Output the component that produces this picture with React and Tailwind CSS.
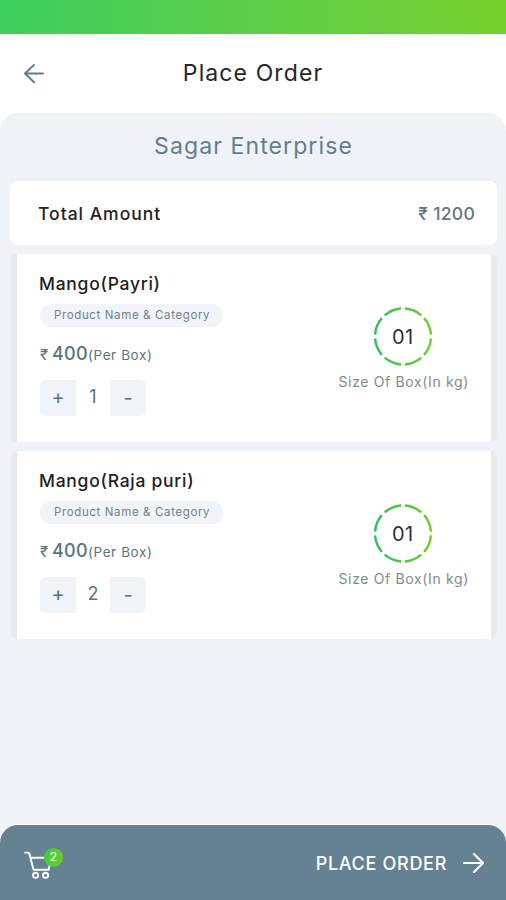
import { useState } from 'react';

const initialItems = [
  { id: 1, name: 'Mango(Payri)', price: 400, size: '01', qty: 1 },
  { id: 2, name: 'Mango(Raja puri)', price: 400, size: '01', qty: 2 },
];

function BackArrow() {
  return (
    <svg width="20" height="20" viewBox="0 0 20 20" fill="none" stroke="#5d7d8f" strokeWidth="2" strokeLinecap="round" strokeLinejoin="round">
      <path d="M19 9.500H1M10 .9L1 9.500l9 8.800" />
    </svg>
  );
}

function CartIcon() {
  return (
    <svg width="28" height="28" viewBox="0 0 28 28" fill="none" stroke="white" strokeWidth="1.9" strokeLinecap="round" strokeLinejoin="round">
      <path d="M1 1.600h2.800c.9 0 1.400.4 1.600 1.200L9.500 18.800h15.200M6.600 6.800h20.200l-2.100 12" />
      <circle cx="11.600" cy="24.300" r="2.600" />
      <circle cx="21.600" cy="24.300" r="2.600" />
    </svg>
  );
}

function SizeRing({ id, size }) {
  return (
    <div className="relative w-[60px] h-[60px] mr-[2px] flex items-center justify-center">
      <svg className="absolute inset-0" width="60" height="60" viewBox="0 0 60 60" fill="none">
        <defs>
          <linearGradient id={`ring-${id}`} x1="0" y1="0" x2="60" y2="0" gradientUnits="userSpaceOnUse">
            <stop stopColor="#2dbf63" />
            <stop offset="1" stopColor="#78cc2c" />
          </linearGradient>
        </defs>
        {/* 8 dashes, a gap at the top */}
        <circle cx="30" cy="29.500" r="28" stroke={`url(#ring-${id})`} strokeWidth="2.400" pathLength="80" strokeDasharray="8.200 1.800" strokeDashoffset="-0.9" />
      </svg>
      <span className="text-[20px] text-[#2e3033] tracking-[0.3px]">{size}</span>
    </div>
  );
}

function ItemCard({ item, onChange }) {
  return (
    <div className="h-[188px] flex">
      <div className="w-[7px] rounded-l-lg bg-linear-to-r from-[#ebeef1] to-[#e5e7e9]" />
      <div className="flex-1 bg-white flex justify-between pl-[22px] pr-[22px]">
        <div className="pt-[18px]">
          <h2 className="text-[17.500px] leading-6 font-medium text-[#1f2122] tracking-[0.72px] whitespace-nowrap">{item.name}</h2>
          <div className="mt-2 ml-px w-[183px] h-[23px] rounded-full bg-[#f1f5f9] flex items-center pl-[14px] text-[11.500px] text-[#70818b] tracking-[0.63px] whitespace-nowrap">
            Product Name &amp; Category
          </div>
          <p className="mt-[15px] h-6 flex items-baseline leading-6 text-[#5a7380] whitespace-nowrap">
            <span className="text-[15px] w-[12px] ml-px">₹</span>
            <span className="text-[18px] font-medium tracking-[0.3px]">{item.price}</span>
            <span className="text-[13.500px] tracking-[0.6px]">(Per Box)</span>
          </p>
          <div className="mt-[14px] ml-px w-[106px] h-9 flex rounded-md overflow-hidden text-[#5a7380]">
            <button onClick={() => onChange(item.id, 1)} className="w-9 bg-[#f0f3f7] text-[20px] leading-none pb-0.5">+</button>
            <span className="w-[34px] flex items-center justify-center text-[18px] pb-[3px]">{item.qty}</span>
            <button onClick={() => onChange(item.id, -1)} className="flex-1 bg-[#f0f3f7] text-[20px] leading-none">-</button>
          </div>
        </div>
        <div className="pt-[53px] flex flex-col items-center">
          <SizeRing id={item.id} size={item.size} />
          <p className="mt-[5px] text-[14px] leading-5 text-[#7f8b91] tracking-[0.65px] whitespace-nowrap">Size Of Box(In kg)</p>
        </div>
      </div>
      <div className="w-[6px] rounded-r-lg bg-linear-to-r from-[#e5e7e9] to-[#ebeef1]" />
    </div>
  );
}

export default function App() {
  const [items, setItems] = useState(initialItems);

  const changeQty = (id, step) => {
    setItems(items.map((item) => (item.id === id ? { ...item, qty: Math.max(0, item.qty + step) } : item)));
  };

  return (
    <div className="h-[900px] w-full flex flex-col overflow-hidden bg-white font-['Inter',sans-serif]">
      <div className="h-[34px] shrink-0 bg-linear-to-r from-[#3bce5f] to-[#76cf2a]" />
      <header className="h-[79px] shrink-0 grid grid-cols-[60px_1fr_60px] items-center">
        <button className="pl-6">
          <BackArrow />
        </button>
        <h1 className="text-center text-[23px] text-[#242628] tracking-[1.1px]">Place Order</h1>
      </header>

      <main className="flex-1 flex flex-col rounded-t-[18px] bg-[#eff3f8] pl-[10px] pr-[9px]">
        <p className="h-[68px] pt-[17px] text-center text-[23px] leading-8 text-[#607f90] tracking-[1.1px]">Sagar Enterprise</p>
        <div className="h-16 rounded-lg bg-white flex items-center justify-between pl-7 pr-[22px] pt-0.5">
          <span className="text-[17.500px] font-medium text-[#1f2122] tracking-[1px]">Total Amount</span>
          <span className="text-[17.500px] font-medium text-[#607682] tracking-[0.3px]">₹ 1200</span>
        </div>
        <div className="mt-[9px] flex flex-col gap-[9px]">
          {items.map((item) => (
            <ItemCard key={item.id} item={item} onChange={changeQty} />
          ))}
        </div>
      </main>

      <div className="h-[75px] shrink-0 bg-[#eff3f8]">
        <footer className="h-full rounded-t-[18px] bg-[#658293] flex items-center justify-between pl-6 pr-[22px] pt-px text-white shadow-[0_-1px_1px_#ffffff]">
          <div className="relative mt-[3px]">
            <CartIcon />
            <span className="absolute left-5 -top-[3px] w-[19px] h-[19px] rounded-full bg-linear-to-r from-[#41cc3f] to-[#66cc2e] flex items-center justify-center text-[12px]">2</span>
          </div>
          <button className="flex items-center gap-4 text-[18px] font-medium tracking-[0.7px]">
            PLACE ORDER
            <svg width="21" height="20" viewBox="0 0 21 20" fill="none" stroke="white" strokeWidth="2.200" strokeLinecap="round" strokeLinejoin="round">
              <path d="M1 10h19M11 1l9 9-9 9" />
            </svg>
          </button>
        </footer>
      </div>
    </div>
  );
}
